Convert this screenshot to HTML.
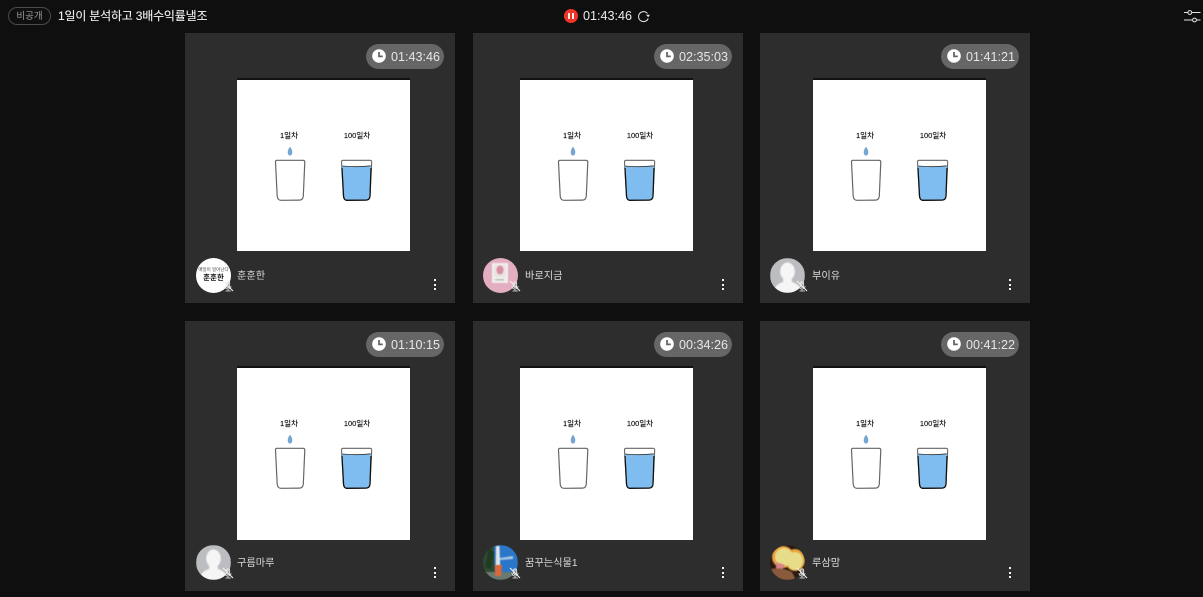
<!DOCTYPE html>
<html lang="ko"><head><meta charset="utf-8"><title>1일이 분석하고 3배수익률낼조</title>
<style>
*{box-sizing:border-box;margin:0;padding:0}
html,body{width:1203px;height:597px;overflow:hidden;background:#0f0f0f;font-family:"Liberation Sans","Noto Sans CJK KR",sans-serif}
.abs{position:absolute}
.card{position:absolute;width:270px;height:270px;background:#2d2d2d}
.pill{position:absolute;top:11px;height:25px;width:78px;border-radius:13px;background:#666;color:#e6e6e6;font-size:12.6px;line-height:26px;padding-left:25px;white-space:nowrap}
.pill svg{position:absolute;left:6px;top:5px}
.img{position:absolute;top:45px;width:173px;height:173px;background:#fff;border-top:2px solid #111}
.img svg{position:absolute;left:0;top:-2px}
.img span{position:absolute;top:50px;font-size:7.5px;line-height:12px;color:#111;-webkit-text-stroke:.15px #111;white-space:nowrap;transform:translateX(-50%)}
.av{position:absolute;top:225px;width:35px;height:35px;border-radius:50%;overflow:hidden}
.av svg{filter:blur(.5px)}
.mic{position:absolute;top:247px}
.name{position:absolute;top:236px;font-size:10.2px;line-height:16px;color:#dcdcdc;white-space:nowrap}
.dots{position:absolute;top:246px;width:2px}
.dots i{display:block;width:2px;height:2px;background:#f2f2f2;margin-bottom:2.5px}
.r2 .av{top:224px}
.r2 .name{top:235px}
.r2 .mic{top:246px}
.r2 .img{height:174px}
</style></head><body>
<svg width="0" height="0" style="position:absolute">
<defs>
<symbol id="art" viewBox="0 0 173 173">
<path d="M53 69 C50 73 50.500 77 53 77.500 C55.500 77 56 73 53 69Z" fill="#6fa8d8" stroke="#7f93a3" stroke-width=".4"/>
<path d="M40 82.300 L66 82.300 Q67.800 82.300 67.800 84 L66.300 118 Q66 122 62.500 122.100 L44 122.300 Q40.500 122.300 40.200 118 L38.500 84 Q38.500 82.300 40 82.300 Z" fill="#fff" stroke="#666" stroke-width="1.200"/>
<path d="M105.300 88 Q120 89.500 133.800 87.800 L132.300 118 Q132 122 128.500 122.100 L110 122.300 Q107 122.300 106.600 118 Z" fill="#7fbcf0"/>
<path d="M106 82.300 L133 82.300 Q134.800 82.300 134.700 84 L133 118 Q132.800 122 129 122.100 L110 122.300 Q106.800 122.300 106.500 118 L104.500 84 Q104.500 82.300 106 82.300 Z" fill="none" stroke="#666" stroke-width="1.100"/>
<path d="M105.300 88 Q120 89.500 133.800 87.800" fill="none" stroke="#333" stroke-width=".8"/>
<path d="M105 90L106.500 118 Q106.800 122.300 110 122.300 L129 122.100 Q132.800 122 133 118 L134 90" fill="none" stroke="#111" stroke-width="1.300"/>
</symbol>
<symbol id="clock" viewBox="0 0 14 14"><circle cx="7" cy="7" r="6.800" fill="#fff"/><path d="M7 3V7.400H10.800" fill="none" stroke="#666" stroke-width="1.800"/></symbol>
<symbol id="micoff" viewBox="0 0 12 12"><path d="M1 1L11 11" stroke="#f4f4f4" stroke-width="1.100"/><rect x="4.500" y="1.800" width="3.200" height="5.700" rx="1.600" fill="#ddd" fill-opacity=".5" stroke="#e8e8e8" stroke-width=".8"/><path d="M3 6Q3 9 6 9Q9 9 9 6M6 9V11M3.500 11H9" fill="none" stroke="#e8e8e8" stroke-width=".8"/></symbol>
<symbol id="person" viewBox="0 0 35 35"><rect width="35" height="35" fill="#bcbdc0"/><ellipse cx="17.500" cy="13.500" rx="7.300" ry="9" fill="#f5f5f5"/><path d="M13.500 19L21.500 19L22 24Q30 26 32 35H3Q5 26 13 24Z" fill="#f5f5f5"/></symbol>
</defs></svg>

<div class="abs" style="left:8px;top:7px;width:43px;height:18px;border:1px solid #4a4a4a;border-radius:9px;color:#9a9a9a;font-size:9.5px;line-height:17px;text-align:center">비공개</div>
<div class="abs" style="left:58px;top:7px;color:#f0f0f0;font-size:12px;line-height:18px;letter-spacing:-.2px;-webkit-text-stroke:.1px #f0f0f0;white-space:nowrap">1일이 분석하고 3배수익률낼조</div>
<svg class="abs" style="left:564px;top:9px" width="14" height="14" viewBox="0 0 14 14"><circle cx="7" cy="7" r="7" fill="#ee3528"/><path d="M5 4V10M9 4V10" stroke="#fff" stroke-width="1.800"/></svg>
<div class="abs" style="left:583px;top:7px;color:#ececec;font-size:12.600px;line-height:18px">01:43:46</div>
<svg class="abs" style="left:637px;top:10px" width="14" height="13" viewBox="0 0 14 13"><path d="M10.500 3.500A5 5 0 1 0 11.200 8.500" fill="none" stroke="#e8e8e8" stroke-width="1"/><path d="M9 4.800H13L11.200 7.300Z" fill="#e8e8e8"/></svg>
<svg class="abs" style="left:1184px;top:9px" width="17" height="14" viewBox="0 0 17 14"><path d="M0 3.500H4M8 3.500H16.500M0 11H8.500M12.500 11H16.500" stroke="#e4e4e4" stroke-width="1"/><circle cx="5.800" cy="3.500" r="1.900" fill="none" stroke="#e4e4e4"/><circle cx="10.500" cy="11" r="1.900" fill="none" stroke="#e4e4e4"/></svg>

<!-- Card 1 -->
<div class="card" style="left:185px;top:33px">
<div class="pill" style="left:181px"><svg width="14" height="14"><use href="#clock"/></svg>01:43:46</div>
<div class="img" style="left:52px"><svg width="173" height="173"><use href="#art"/></svg><span style="left:52px">1일차</span><span style="left:120px">100일차</span></div>
<div class="av" style="left:11px;background:#fff;color:#111;text-align:center"><div style="font-size:4.500px;line-height:6px;margin-top:9px;white-space:nowrap;color:#444">매일이 일어난다</div><div style="font-size:7.500px;line-height:10px;font-weight:bold;white-space:nowrap">훈훈한</div></div>
<svg class="mic" style="left:37px" width="12" height="12"><use href="#micoff"/></svg>
<div class="name" style="left:52px">훈훈한</div>
<div class="dots" style="left:249px"><i></i><i></i><i></i></div>
</div>

<!-- Card 2 -->
<div class="card" style="left:473px;top:33px">
<div class="pill" style="left:181px"><svg width="14" height="14"><use href="#clock"/></svg>02:35:03</div>
<div class="img" style="left:47px"><svg width="173" height="173"><use href="#art"/></svg><span style="left:52px">1일차</span><span style="left:120px">100일차</span></div>
<div class="av" style="left:10px;background:#e3adc2"><svg width="35" height="35"><rect x="9" y="5" width="16" height="20" fill="#f1efec"/><rect x="11" y="7" width="12" height="12" fill="#e8e4e1"/><ellipse cx="17" cy="12" rx="3.500" ry="4.500" fill="#dc8ca4"/><rect x="12" y="21" width="9" height="1.500" fill="#bbb"/></svg></div>
<svg class="mic" style="left:36px" width="12" height="12"><use href="#micoff"/></svg>
<div class="name" style="left:52px">바로지금</div>
<div class="dots" style="left:249px"><i></i><i></i><i></i></div>
</div>

<!-- Card 3 -->
<div class="card" style="left:760px;top:33px">
<div class="pill" style="left:181px"><svg width="14" height="14"><use href="#clock"/></svg>01:41:21</div>
<div class="img" style="left:53px"><svg width="173" height="173"><use href="#art"/></svg><span style="left:52px">1일차</span><span style="left:120px">100일차</span></div>
<div class="av" style="left:10px"><svg width="35" height="35"><use href="#person"/></svg></div>
<svg class="mic" style="left:36px" width="12" height="12"><use href="#micoff"/></svg>
<div class="name" style="left:52px">부이유</div>
<div class="dots" style="left:249px"><i></i><i></i><i></i></div>
</div>

<!-- Card 4 -->
<div class="card r2" style="left:185px;top:321px">
<div class="pill" style="left:181px"><svg width="14" height="14"><use href="#clock"/></svg>01:10:15</div>
<div class="img" style="left:52px"><svg width="173" height="173"><use href="#art"/></svg><span style="left:52px">1일차</span><span style="left:120px">100일차</span></div>
<div class="av" style="left:11px"><svg width="35" height="35"><use href="#person"/></svg></div>
<svg class="mic" style="left:37px" width="12" height="12"><use href="#micoff"/></svg>
<div class="name" style="left:52px">구름마루</div>
<div class="dots" style="left:249px"><i></i><i></i><i></i></div>
</div>

<!-- Card 5 -->
<div class="card r2" style="left:473px;top:321px">
<div class="pill" style="left:181px"><svg width="14" height="14"><use href="#clock"/></svg>00:34:26</div>
<div class="img" style="left:47px"><svg width="173" height="173"><use href="#art"/></svg><span style="left:52px">1일차</span><span style="left:120px">100일차</span></div>
<div class="av" style="left:10px"><svg width="35" height="35"><rect width="35" height="35" fill="#2a76c8"/><path d="M0 0H11L12 35H0Z" fill="#2f4a30"/><path d="M0 27H35V35H0Z" fill="#6a7a70"/><path d="M13 1L16.500 1L17.500 30H12.500Z" fill="#dfe3e6"/><path d="M12 20H19L18 31H12Z" fill="#d9683c"/><path d="M17 13L30 11V14L17 15Z" fill="#a8c8e4"/><path d="M6 2L11 8L8 24L2 22Z" fill="#1f3b22"/></svg></div>
<svg class="mic" style="left:36px" width="12" height="12"><use href="#micoff"/></svg>
<div class="name" style="left:52px">꿈꾸는식물1</div>
<div class="dots" style="left:249px"><i></i><i></i><i></i></div>
</div>

<!-- Card 6 -->
<div class="card r2" style="left:760px;top:321px">
<div class="pill" style="left:181px"><svg width="14" height="14"><use href="#clock"/></svg>00:41:22</div>
<div class="img" style="left:53px"><svg width="173" height="173"><use href="#art"/></svg><span style="left:52px">1일차</span><span style="left:120px">100일차</span></div>
<div class="av" style="left:10px"><svg width="35" height="35"><rect width="35" height="35" fill="#2a1a12"/><ellipse cx="13" cy="12" rx="11" ry="11" fill="#e8a23c"/><ellipse cx="25" cy="15" rx="10" ry="11" fill="#e8a23c"/><ellipse cx="14" cy="12" rx="9" ry="9" fill="#e6dc8a"/><ellipse cx="25" cy="16" rx="8" ry="9" fill="#e6dc8a"/><path d="M6 17L15 20L12 25L6 24Z" fill="#d8848a"/><path d="M1 24Q12 22 22 27L26 35H0Z" fill="#8a5a3c"/></svg></div>
<svg class="mic" style="left:36px" width="12" height="12"><use href="#micoff"/></svg>
<div class="name" style="left:52px">루삼맘</div>
<div class="dots" style="left:249px"><i></i><i></i><i></i></div>
</div>
</body></html>
